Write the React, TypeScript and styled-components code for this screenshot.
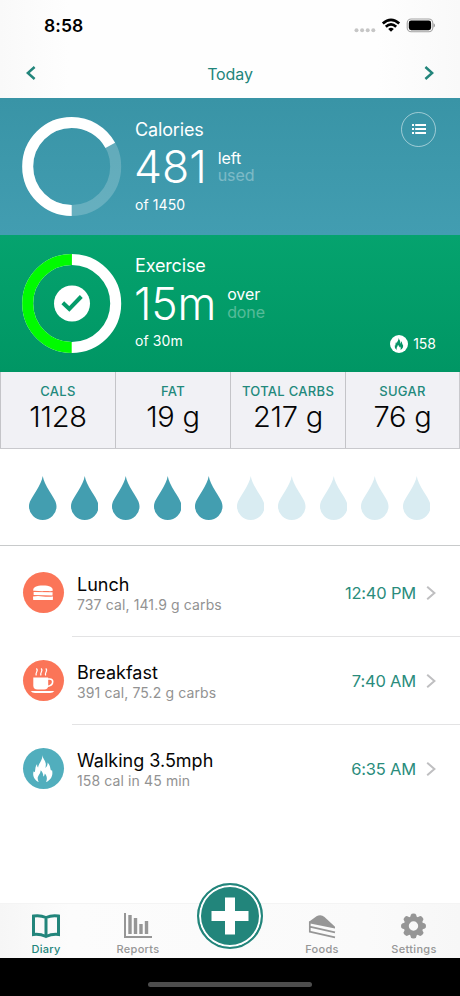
import React from "react";
import styled, { createGlobalStyle } from "styled-components";

const GlobalStyle = createGlobalStyle`
  *, *::before, *::after { box-sizing: border-box; }
  body {
    margin: 0;
    background: #fff;
    font-family: Inter, "Liberation Sans", sans-serif;
    color: #050505;
  }
  svg { display: block; flex: none; }
  button { font: inherit; color: inherit; border: 0; padding: 0; background: none; }
`;

const Screen = styled.main`
  width: 460px;
  height: 996px;
  display: flex;
  flex-direction: column;
  overflow: hidden;
  background: #fff;
`;

const Header = styled.header`
  height: 98px;
  flex: none;
  background: linear-gradient(90deg, #f9f9f9, #fefefe 15%, #fefefe 82%, #f9f9f9);
`;

const StatusBar = styled.div`
  height: 50px;
  padding: 1px 25px 0 44px;
  display: flex;
  justify-content: space-between;
  align-items: center;
`;

const Clock = styled.span`
  font-size: 17.5px;
  font-weight: 600;
  letter-spacing: 0.1px;
  color: #000;
`;

const DateNav = styled.nav`
  height: 48px;
  padding: 0 26px 2px;
  display: flex;
  justify-content: space-between;
  align-items: center;
  color: #22857b;
`;

const DateTitle = styled.span`
  padding-top: 1px;
  font-size: 16px;
  letter-spacing: -0.1px;
`;

const Panel = styled.section<{ $kind: "calories" | "exercise" }>`
  height: ${(p) => (p.$kind === "calories" ? "137px" : "136.5px")};
  flex: none;
  display: flex;
  padding: 18.5px 24px 0 22px;
  color: #fff;
  background: ${(p) =>
    p.$kind === "calories"
      ? "linear-gradient(#3994a6, #429db1)"
      : "linear-gradient(#05a36e, #009664)"};
`;

const PanelText = styled.div<{ $top: number }>`
  margin-left: 13px;
  padding-top: ${(p) => p.$top}px;
  flex: 1;
`;

const PanelTitle = styled.div`
  font-size: 18px;
  line-height: 22px;
  letter-spacing: -0.15px;
`;

const Amount = styled.div`
  display: flex;
  align-items: center;
  gap: 11px;
  margin: 2px 0 5px;
  height: 48px;
`;

const AmountValue = styled.span<{ $spacing: number }>`
  font-size: 44.5px;
  line-height: 48px;
  font-weight: 330;
  margin-left: -1px;
  padding-top: 1.5px;
  letter-spacing: ${(p) => p.$spacing}px;
`;

const Toggle = styled.div`
  display: flex;
  flex-direction: column;
  padding-top: 1px;
  font-size: 16px;
  line-height: 17.5px;
  letter-spacing: -0.1px;
`;

const Dimmed = styled.span`
  opacity: 0.32;
`;

const Goal = styled.div`
  font-size: 14px;
  line-height: 18px;
  letter-spacing: 0.1px;
`;

const ListButton = styled.button`
  width: 35px;
  height: 35px;
  margin: -5px 0 0;
  border: 1px solid rgba(255, 255, 255, 0.5);
  border-radius: 50%;
  color: #fff;
  display: grid;
  place-items: center;
`;

const Burned = styled.div`
  align-self: flex-end;
  display: flex;
  align-items: center;
  gap: 5px;
  padding-bottom: 18.5px;
  font-size: 14px;
  line-height: 19px;
`;

const Stats = styled.section`
  height: 77.5px;
  flex: none;
  display: grid;
  grid-template-columns: 115px 115px 115px 1fr;
  background: #f1f1f5;
  border: 1px solid #c9c9cd;
  border-width: 0 1px 1px 0;
`;

const Stat = styled.div`
  display: flex;
  flex-direction: column;
  align-items: center;
  padding-top: 11px;
  border-left: 1px solid #c4c4c8;
`;

const StatLabel = styled.span`
  font-size: 13px;
  line-height: 17px;
  font-weight: 450;
  letter-spacing: 0.3px;
  color: #22897c;
  white-space: nowrap;
`;

const StatValue = styled.span`
  font-size: 29px;
  line-height: 34px;
  font-weight: 300;
  letter-spacing: -0.2px;
`;

const Water = styled.section`
  height: 97px;
  flex: none;
  display: flex;
  justify-content: space-between;
  padding: 27px 30px 0 29px;
  border-bottom: 1px solid #c8cacb;
`;

const Entries = styled.ul`
  margin: 3px 0 0;
  padding: 0;
  list-style: none;
  flex: 1;
`;

const Entry = styled.li`
  display: flex;
  height: 88px;
  padding-left: 22px;
  align-items: center;
`;

const EntryIcon = styled.div<{ $color: string }>`
  width: 41px;
  height: 41px;
  flex: none;
  margin: 0 0.5px 1px;
  border-radius: 50%;
  color: #fff;
  background: ${(p) => p.$color};
  display: grid;
  place-items: center;
`;

const EntryBody = styled.div`
  flex: 1;
  height: 100%;
  margin-left: 8px;
  padding: 1px 24px 0 5px;
  display: flex;
  align-items: center;
  border-bottom: 1px solid #e3e3e4;
  ${Entry}:last-child & { border-color: transparent; }
`;

const EntryText = styled.div`
  flex: 1;
  padding-top: 1.5px;
`;

const EntryTitle = styled.div`
  font-size: 18px;
  line-height: 22px;
`;

const EntryDetail = styled.div`
  font-size: 14px;
  line-height: 18px;
  letter-spacing: 0.12px;
  color: #929292;
`;

const EntryTime = styled.span`
  font-size: 16.5px;
  letter-spacing: -0.2px;
  color: #2a8c7c;
  margin-right: 10px;
  padding-bottom: 1px;
`;

const TabBar = styled.nav`
  height: 55px;
  flex: none;
  display: grid;
  grid-template-columns: repeat(5, 1fr);
  background: linear-gradient(90deg, #f6f6f6, #fcfcfc 15%, #fafafa 80%, #f7f7f7);
  border-top: 1px solid #f4f4f4;
`;

const Tab = styled.button<{ $active?: boolean }>`
  display: flex;
  flex-direction: column;
  align-items: center;
  padding-top: 8.5px;
  color: ${(p) => (p.$active ? "#22857b" : "#969696")};
`;

const TabLabel = styled.span`
  margin-top: 3.5px;
  font-size: 11px;
  line-height: 14px;
  font-weight: 500;
  letter-spacing: 0.3px;
`;

const AddButton = styled.button`
  width: 66px;
  height: 66px;
  margin-top: -21.5px;
  justify-self: center;
  border: 2px solid #22857b;
  border-radius: 50%;
  background: #22857b;
  box-shadow: inset 0 0 0 2px #fff;
  color: #fff;
  display: grid;
  place-items: center;
`;

const HomeArea = styled.footer`
  height: 38px;
  flex: none;
  background: #000;
  display: flex;
  justify-content: center;
  padding-top: 23.5px;
`;

const HomeIndicator = styled.div`
  width: 164px;
  height: 5px;
  border-radius: 3px;
  background: #4d4d4d;
`;

const R = 44;
const CIRC = 2 * Math.PI * R;

function Ring({ track, fill, portion, children }: {
  track: string; fill: string; portion: number; children?: React.ReactNode;
}) {
  return (
    <svg width="100" height="100" viewBox="0 0.5 100 100" fill="none">
      <circle cx="49.7" cy="50" r={R} stroke={track} strokeWidth="11" />
      <circle cx="49.7" cy="50" r={R} stroke={fill} strokeWidth="11"
        strokeDasharray={`${CIRC * portion} ${CIRC}`} transform="rotate(90 49.7 50)" />
      {children}
    </svg>
  );
}

function Flame({ size, color = "currentColor" }: { size: number; color?: string }) {
  return (
    <svg width={size} height={size * 1.35} viewBox="0 0 20 27" fill={color}>
      <path d="M9.3 0c.3 3.200 2.800 5.200 3.400 8.200.3 1.600.1 3.200-.4 4.800 1.600-1 2.500-3.200 2.300-5.600 2.700 2.600 2.400 5 3.100 7.400.2.900.7 1 1.300.2 1.400 5.200-1 9.900-6 12 1.700-3.600.7-6.200-1.200-8.400-.2 1.500-.6 2.500-1.500 3.100.1-3-1.100-5-2.700-6.400.1 3.600-3 5-2.900 8.300 0 1.200.4 2.400 1 3.300C1.700 25.300-.9 21 .6 16.200c.6 1.100 1.200 1.100 1.400.1.400-2.500.3-5.100 2.100-7.300-.1 1.700.2 2.800 1 3.500C5.500 8.300 9.900 5.200 9.300 0Z" />
    </svg>
  );
}

function Chevron({ dir, w, h, stroke, color }: {
  dir: "left" | "right"; w: number; h: number; stroke: number; color: string;
}) {
  const e = stroke * 0.4;
  const d = dir === "left"
    ? `M${w - e - 0.4} ${e}L${e + 0.8} ${h / 2}L${w - e - 0.4} ${h - e}`
    : `M${e + 0.4} ${e}L${w - e - 0.8} ${h / 2}L${e + 0.4} ${h - e}`;
  return (
    <svg width={w} height={h} fill="none">
      <path d={d} stroke={color} strokeWidth={stroke} />
    </svg>
  );
}

function StatusIcons() {
  return (
    <svg width="82" height="16" viewBox="0 0 82 16">
      <g fill="#c6c6c6">
        <circle cx="3.500" cy="12.200" r="2" /><circle cx="9.100" cy="12.200" r="2" />
        <circle cx="14.700" cy="12.200" r="2" /><circle cx="20.300" cy="12.200" r="2" />
      </g>
      <g fill="none" stroke="#000" strokeWidth="2.700">
        <path d="M29.800 5.600Q38 -1.800 46.200 5.600" />
        <path d="M32.800 8.800Q38 4 43.200 8.800" />
      </g>
      <path d="M35.200 10.900Q38 8.600 40.800 10.900L38 13.800Z" />
      <rect x="54.200" y="1" width="25.600" height="12.700" rx="4" fill="none" stroke="#a3a3a3" strokeWidth="1.100" />
      <rect x="55.800" y="2.500" width="22.300" height="9.700" rx="2.400" />
      <path d="M80.500 5.200q1.500 .6 1.500 2.200t-1.500 2.200Z" fill="#999" />
    </svg>
  );
}

function Drop({ full }: { full: boolean }) {
  return (
    <svg width="27.5" height="44" viewBox="0 0 28 44" preserveAspectRatio="none" fill={full ? "#439eb0" : "#d9ecf2"}>
      <path d="M14 0C14.800 4.500 17 9 21 15.500C25.500 22.500 28 26 28 30.500A14 13.500 0 0 1 0 30.500C0 26 2.500 22.500 7 15.500C11 9 13.200 4.500 14 0Z" />
    </svg>
  );
}

function Sandwich() {
  return (
    <svg width="22" height="16" viewBox="0 0 22 16" fill="#fff">
      <path d="M1.200 5.800C1 2 4.400.6 11 .6S21 2 20.800 5.800c-3 .8-5-.1-8 .3-4 .6-8-.7-11.600-.3Z" />
      <path d="M1.600 7 20.600 7.200 20.500 10.400 1.600 9.900Z" />
      <path d="M1 11.400Q6 10.700 11 11.400T21 11.400L20.800 14.900H1.200Z" />
    </svg>
  );
}

function Cup() {
  return (
    <svg width="26" height="27" viewBox="0 0 26 27" fill="none">
      <path d="M3.300 10.500H18.200V18.500Q18.200 22.600 14.200 22.600H7.500Q3.300 22.600 3.300 18.500Z" fill="#fff" />
      <path d="M18 12h1.700q3 0 3 2.700 0 3.800-5.700 4.800" stroke="#fff" strokeWidth="1.600" />
      <path d="M.7 23.900H24.300Q23 25.900 20 25.900H5Q2 25.900.7 23.900Z" fill="#fff" />
      <path d="M6.300 1.500c3 2-1.600 3.700 0 7M11 1.500c3 2-1.600 3.700 0 7M15.700 1.500c3 2-1.600 3.700 0 7" stroke="#fff" strokeWidth="1.200" />
    </svg>
  );
}

function BookIcon() {
  return (
    <svg width="28" height="26" viewBox="0 0 28 26" fill="none" stroke="currentColor" strokeWidth="3">
      <path d="M1.500 3Q8 1.800 14 4.500 20 1.800 26.500 3V21.500Q20 20.800 14 23.500 8 20.800 1.500 21.500ZM14 4.500V23" />
    </svg>
  );
}

function ReportsIcon() {
  return (
    <svg width="28" height="26" viewBox="0 0 28 26" fill="currentColor">
      <path d="M0 0H2V23H28V25H0Z" />
      <path d="M4.300 2H7.700V21H4.300ZM9.800 5H13.200V21H9.800ZM15.300 11H18.700V21H15.300ZM20.800 8H24.200V21H20.800Z" />
    </svg>
  );
}

function CakeIcon() {
  return (
    <svg width="28" height="26" viewBox="0 0 28 26">
      <path d="M1 8.800 8.500 3.200Q13 .8 16.500 4L27 13.800V15.600L1 10.200Z" fill="currentColor" />
      <path d="M1.800 8.500V19.500M1.500 13.600 27 19.300M1.500 18.700 27 24.400" fill="none" stroke="currentColor" strokeWidth="1.700" />
    </svg>
  );
}

function GearIcon() {
  const teeth = [0, 45, 90, 135, 180, 225, 270, 315];
  return (
    <svg width="26" height="26" viewBox="-12.500 -13 26 26" fill="currentColor">
      <circle r="7.200" fill="none" stroke="currentColor" strokeWidth="5" />
      {teeth.map((a) => (
        <path key={a} d="M-3.500 -8.500 -2.600 -11.300Q-2.100 -12.500 0 -12.500T2.600 -11.300L3.500 -8.500Z" transform={`rotate(${a})`} />
      ))}
    </svg>
  );
}

const stats = [
  ["CALS", "1128"],
  ["FAT", "19 g"],
  ["TOTAL CARBS", "217 g"],
  ["SUGAR", "76 g"],
];

const entries = [
  { title: "Lunch", detail: "737 cal, 141.9 g carbs", time: "12:40 PM", color: "#fb7558", icon: <Sandwich /> },
  { title: "Breakfast", detail: "391 cal, 75.2 g carbs", time: "7:40 AM", color: "#fb7558", icon: <Cup /> },
  { title: "Walking 3.5mph", detail: "158 cal in 45 min", time: "6:35 AM", color: "#51aebd", icon: <Flame size={20} /> },
];

export default function App() {
  return (
    <Screen>
      <GlobalStyle />
      <Header>
        <StatusBar>
          <Clock>8:58</Clock>
          <StatusIcons />
        </StatusBar>
        <DateNav>
          <Chevron dir="left" w={10} h={14} stroke={2.5} color="#22857b" />
          <DateTitle>Today</DateTitle>
          <Chevron dir="right" w={10} h={14} stroke={2.5} color="#22857b" />
        </DateNav>
      </Header>

      <Panel $kind="calories">
        <Ring track="rgba(255,255,255,0.2)" fill="#fff" portion={0.669} />
        <PanelText $top={2}>
          <PanelTitle>Calories</PanelTitle>
          <Amount>
            <AmountValue $spacing={0}>481</AmountValue>
            <Toggle><span>left</span><Dimmed>used</Dimmed></Toggle>
          </Amount>
          <Goal>of 1450</Goal>
        </PanelText>
        <ListButton aria-label="Show list">
          <svg width="14" height="10" viewBox="0 0 14 10" fill="currentColor">
            <path d="M0 0H2V2H0ZM3.200 0H14V2H3.200ZM0 4H2V6H0ZM3.200 4H14V6H3.200ZM0 8H2V10H0ZM3.200 8H14V10H3.200Z" />
          </svg>
        </ListButton>
      </Panel>

      <Panel $kind="exercise">
        <Ring track="#fff" fill="#00fb00" portion={0.5}>
          <circle cx="50" cy="50" r="18" fill="#fff" />
          <path d="M40.800 49.300 47.300 55.500 59.300 43" stroke="#059b69" strokeWidth="4" />
        </Ring>
        <PanelText $top={1.6}>
          <PanelTitle>Exercise</PanelTitle>
          <Amount>
            <AmountValue $spacing={-0.2}>15m</AmountValue>
            <Toggle><span>over</span><Dimmed>done</Dimmed></Toggle>
          </Amount>
          <Goal>of 30m</Goal>
        </PanelText>
        <Burned>
          <svg width="18" height="18" viewBox="0 0 18 18">
            <circle cx="9" cy="9" r="9" fill="#fff" />
            <g transform="translate(4.500 2.800) scale(.45)">
              <Flame size={20} color="#079467" />
            </g>
          </svg>
          158
        </Burned>
      </Panel>

      <Stats>
        {stats.map(([label, value]) => (
          <Stat key={label}>
            <StatLabel>{label}</StatLabel>
            <StatValue>{value}</StatValue>
          </Stat>
        ))}
      </Stats>

      <Water>
        {Array.from({ length: 10 }, (_, i) => <Drop key={i} full={i < 5} />)}
      </Water>

      <Entries>
        {entries.map((e) => (
          <Entry key={e.title}>
            <EntryIcon $color={e.color}>{e.icon}</EntryIcon>
            <EntryBody>
              <EntryText>
                <EntryTitle>{e.title}</EntryTitle>
                <EntryDetail>{e.detail}</EntryDetail>
              </EntryText>
              <EntryTime>{e.time}</EntryTime>
              <Chevron dir="right" w={10} h={14} stroke={2} color="#bfbfc1" />
            </EntryBody>
          </Entry>
        ))}
      </Entries>

      <TabBar>
        <Tab $active><BookIcon /><TabLabel>Diary</TabLabel></Tab>
        <Tab><ReportsIcon /><TabLabel>Reports</TabLabel></Tab>
        <AddButton aria-label="Add entry">
          <svg width="38" height="38" viewBox="0 0 38 38" fill="currentColor">
            <path d="M14 .5H24V14H37.500V24H24V37.500H14V24H.5V14H14Z" />
          </svg>
        </AddButton>
        <Tab><CakeIcon /><TabLabel>Foods</TabLabel></Tab>
        <Tab><GearIcon /><TabLabel>Settings</TabLabel></Tab>
      </TabBar>
      <HomeArea><HomeIndicator /></HomeArea>
    </Screen>
  );
}
